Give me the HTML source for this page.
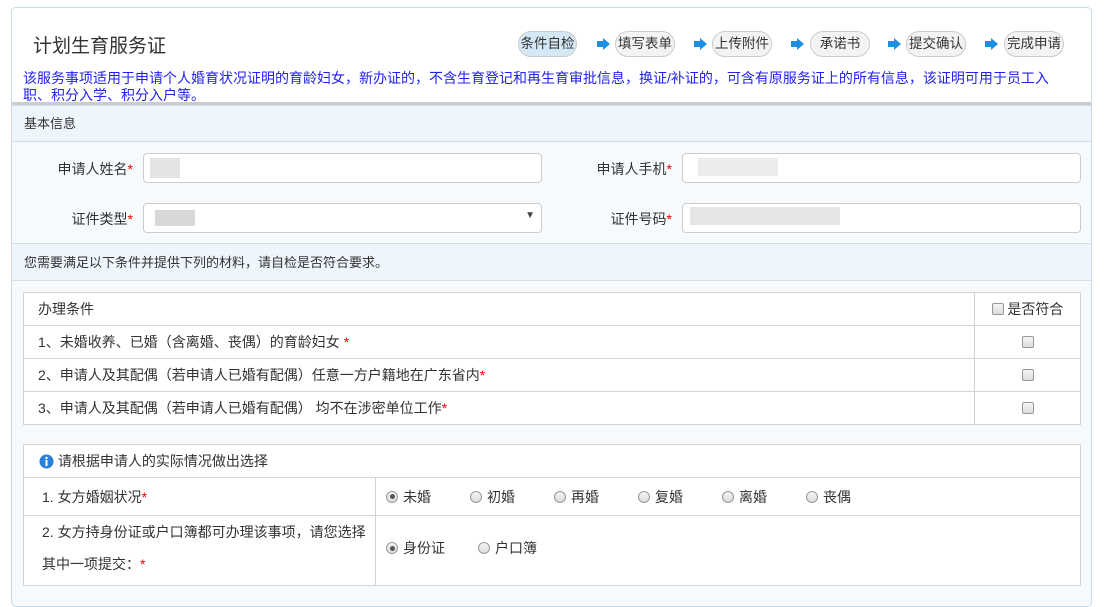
<!DOCTYPE html>
<html><head><meta charset="utf-8"><style>
*{box-sizing:border-box;margin:0;padding:0}
body{width:1109px;height:560px;overflow:hidden;background:#fff;font-family:"Liberation Sans","Noto Sans CJK SC",sans-serif;font-size:13px;color:#333;position:relative}
.abs{position:absolute}
.box{left:11px;top:7px;width:1081px;height:600px;border:1px solid #c9d9ea;border-radius:5px;background:#f7fafd}
.top{left:12px;top:8px;width:1079px;height:95px;background:#fff;border-radius:5px 5px 0 0}
.pill{position:absolute;top:31px;height:26px;border:1px solid #ccc;border-radius:13px;background:#f3f3f3;font-size:13.5px;line-height:24px;text-align:center;color:#333}
.arr{position:absolute;top:38px;width:13px;height:12px}
.band{left:12px;width:1079px;background:#eef5fc;border-top:1px solid #d5dde6;border-bottom:1px solid #d5dde6;padding-left:12px;font-size:13px}
.inp{position:absolute;height:30px;background:#fff;border:1px solid #ccc;border-radius:4px}
.lbl{position:absolute;font-size:14px;text-align:right;width:120px}
.r{color:#e00}
table{position:absolute;border-collapse:collapse;background:#fff}
td{border:1px solid #d3d3d3;font-size:14px}
.cb{display:inline-block;width:12px;height:12px;border:1px solid #999;border-radius:2px;background:linear-gradient(#f4f4f4,#ddd);vertical-align:-1px}
.rd{display:inline-block;width:12px;height:12px;border:1px solid #999;border-radius:50%;background:linear-gradient(#f4f4f4,#ddd);vertical-align:-1px;margin-right:5px;position:relative}
.rd.on::after{content:"";position:absolute;left:2.5px;top:2.5px;width:5px;height:5px;border-radius:50%;background:#555}
.opt{display:inline-block;width:84px}
</style></head><body>
<div class="abs box"></div>
<div class="abs top"></div>
<div class="abs" style="left:33px;top:31px;font-size:19px;color:#333">计划生育服务证</div>
<div class="pill" style="left:518px;width:59px;background:#d5e8f6">条件自检</div>
<div class="pill" style="left:615px;width:60px">填写表单</div>
<div class="pill" style="left:712px;width:60px">上传附件</div>
<div class="pill" style="left:810px;width:60px">承诺书</div>
<div class="pill" style="left:906px;width:60px">提交确认</div>
<div class="pill" style="left:1004px;width:60px">完成申请</div>
<svg class="arr" style="left:597px" viewBox="0 0 13 12"><path d="M0 3h6V0l7 6-7 6V9H0z" fill="#1e8fe0"/></svg>
<svg class="arr" style="left:694px" viewBox="0 0 13 12"><path d="M0 3h6V0l7 6-7 6V9H0z" fill="#1e8fe0"/></svg>
<svg class="arr" style="left:791px" viewBox="0 0 13 12"><path d="M0 3h6V0l7 6-7 6V9H0z" fill="#1e8fe0"/></svg>
<svg class="arr" style="left:888px" viewBox="0 0 13 12"><path d="M0 3h6V0l7 6-7 6V9H0z" fill="#1e8fe0"/></svg>
<svg class="arr" style="left:985px" viewBox="0 0 13 12"><path d="M0 3h6V0l7 6-7 6V9H0z" fill="#1e8fe0"/></svg>
<div class="abs" style="left:23px;top:70px;width:1068px;color:#2222ee;font-size:14px;line-height:17px;white-space:nowrap">该服务事项适用于申请个人婚育状况证明的育龄妇女，新办证的，不含生育登记和再生育审批信息，换证/补证的，可含有原服务证上的所有信息，该证明可用于员工入<br>职、积分入学、积分入户等。</div>
<div class="abs" style="left:12px;top:102px;width:1079px;height:3px;background:#ccc"></div>
<div class="abs band" style="top:105px;height:37px;line-height:36px">基本信息</div>
<div class="lbl" style="left:13px;top:159px">申请人姓名<span class="r">*</span></div>
<div class="inp" style="left:143px;top:153px;width:399px"></div>
<div class="lbl" style="left:552px;top:159px">申请人手机<span class="r">*</span></div>
<div class="inp" style="left:682px;top:153px;width:399px"></div>
<div class="lbl" style="left:13px;top:209px">证件类型<span class="r">*</span></div>
<div class="inp" style="left:143px;top:203px;width:399px"><span style="position:absolute;right:6px;top:6px;font-size:10px;color:#444">▼</span></div>
<div class="lbl" style="left:552px;top:209px">证件号码<span class="r">*</span></div>
<div class="inp" style="left:682px;top:203px;width:399px"></div>
<div class="abs" style="left:150px;top:158px;width:30px;height:20px;background:#e4e4e4"></div>
<div class="abs" style="left:155px;top:210px;width:40px;height:16px;background:#d8d8d8"></div>
<div class="abs" style="left:698px;top:158px;width:80px;height:18px;background:#ececec"></div>
<div class="abs" style="left:690px;top:207px;width:150px;height:18px;background:#e6e6e6"></div>
<div class="abs band" style="top:243px;height:38px;line-height:37px">您需要满足以下条件并提供下列的材料，请自检是否符合要求。</div>
<table style="left:23px;top:292px;width:1058px">
<tr style="height:33px"><td style="padding-left:14px">办理条件</td><td style="width:106px;text-align:center"><span class="cb"></span> 是否符合</td></tr>
<tr style="height:33px"><td style="padding-left:14px">1、未婚收养、已婚（含离婚、丧偶）的育龄妇女 <span class="r">*</span></td><td style="text-align:center"><span class="cb"></span></td></tr>
<tr style="height:33px"><td style="padding-left:14px">2、申请人及其配偶（若申请人已婚有配偶）任意一方户籍地在广东省内<span class="r">*</span></td><td style="text-align:center"><span class="cb"></span></td></tr>
<tr style="height:33px"><td style="padding-left:14px">3、申请人及其配偶（若申请人已婚有配偶） 均不在涉密单位工作<span class="r">*</span></td><td style="text-align:center"><span class="cb"></span></td></tr>
</table>
<table style="left:23px;top:444px;width:1058px">
<tr style="height:33px"><td colspan="2" style="padding-left:15px"><svg width="15" height="15" viewBox="0 0 15 15" style="vertical-align:-3px"><circle cx="7.5" cy="7.5" r="7" fill="#2a7fd8"/><rect x="6.5" y="6" width="2" height="6" fill="#fff"/><circle cx="7.5" cy="4" r="1.2" fill="#fff"/></svg> 请根据申请人的实际情况做出选择</td></tr>
<tr style="height:38px"><td style="width:352px;padding-left:18px">1. 女方婚姻状况<span class="r">*</span></td><td style="padding-left:10px"><span class="opt"><span class="rd on"></span>未婚</span><span class="opt"><span class="rd"></span>初婚</span><span class="opt"><span class="rd"></span>再婚</span><span class="opt"><span class="rd"></span>复婚</span><span class="opt"><span class="rd"></span>离婚</span><span class="opt"><span class="rd"></span>丧偶</span></td></tr>
<tr style="height:70px"><td style="padding-left:18px;line-height:32px;vertical-align:top;padding-top:0">2. 女方持身份证或户口簿都可办理该事项，请您选择其中一项提交：<span class="r">*</span></td><td style="padding-left:10px;vertical-align:top;padding-top:22px"><span class="opt" style="width:92px"><span class="rd on"></span>身份证</span><span class="opt"><span class="rd"></span>户口簿</span></td></tr>
</table>
</body></html>
